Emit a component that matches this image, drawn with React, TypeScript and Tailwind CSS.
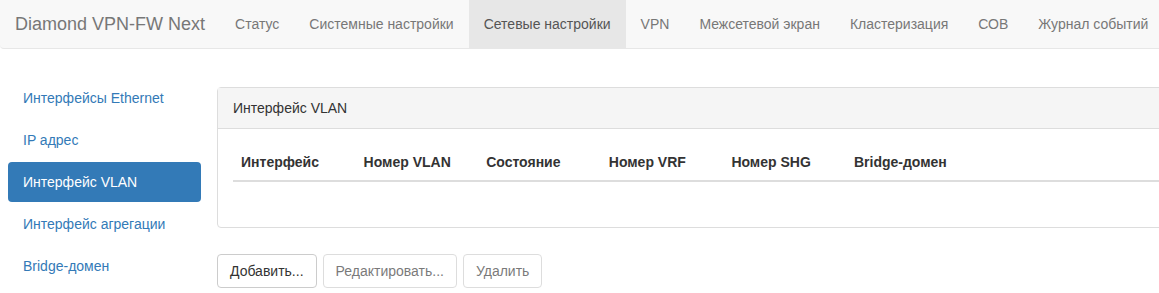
import React from 'react';

const navItems = [
  'Статус',
  'Системные настройки',
  'Сетевые настройки',
  'VPN',
  'Межсетевой экран',
  'Кластеризация',
  'СОВ',
  'Журнал событий',
];

const sideItems = [
  'Интерфейсы Ethernet',
  'IP адрес',
  'Интерфейс VLAN',
  'Интерфейс агрегации',
  'Bridge-домен',
];

const columns = ['Интерфейс', 'Номер VLAN', 'Состояние', 'Номер VRF', 'Номер SHG', 'Bridge-домен'];

export default function App() {
  return (
    <div
      className="w-full h-[293px] overflow-hidden bg-white text-[14px] text-[#333]"
      style={{ fontFamily: '"Liberation Sans", Arial, sans-serif' }}
    >
      <div className="w-[1300px]">
        {/* Top navbar */}
        <div className="flex h-[49px] items-stretch bg-[#f8f8f8] border-b border-[#e7e7e7] rounded-bl-[4px]">
          <div className="flex items-center px-[15px] text-[18px] text-[#777]">Diamond VPN-FW Next</div>
          <ul className="flex items-stretch">
            {navItems.map((item) => (
              <li
                key={item}
                className={`flex items-center px-[15px] ${
                  item === 'Сетевые настройки' ? 'bg-[#e7e7e7] text-[#555]' : 'text-[#777]'
                }`}
              >
                {item}
              </li>
            ))}
          </ul>
        </div>

        <div className="flex gap-[16px] pl-[8px]">
          {/* Side pills */}
          <ul className="w-[193px] pt-[29px] flex flex-col gap-[2px]">
            {sideItems.map((item) => (
              <li
                key={item}
                className={`flex h-[40px] items-center px-[15px] rounded-[4px] ${
                  item === 'Интерфейс VLAN' ? 'bg-[#337ab7] text-white' : 'text-[#337ab7]'
                }`}
              >
                {item}
              </li>
            ))}
          </ul>

          {/* Main */}
          <div className="flex-1 pt-[38px]">
            <div className="border border-[#ddd] rounded-[4px]">
              <div className="h-[41px] flex items-center px-[15px] bg-[#f5f5f5] border-b border-[#ddd] text-[#333]">
                Интерфейс VLAN
              </div>
              <div className="px-[15px] pt-[15px] pb-[45px]">
                <table className="w-full border-collapse table-fixed">
                  <thead>
                    <tr className="border-b-2 border-[#ddd]">
                      {columns.map((c) => (
                        <th key={c} className="w-[122.6px] p-[8px] h-[37px] text-left font-bold leading-[20px] whitespace-nowrap">
                          {c}
                        </th>
                      ))}
                      <th className="p-[8px]"></th>
                    </tr>
                  </thead>
                </table>
              </div>
            </div>

            <div className="flex gap-[6px] mt-[26px]">
              <button className="h-[34px] px-[12px] border border-[#ccc] rounded-[4px] bg-white text-[#333]">
                Добавить...
              </button>
              <button disabled className="h-[34px] px-[12px] border border-[#ccc] rounded-[4px] bg-white text-[#333] opacity-[0.65]">
                Редактировать...
              </button>
              <button disabled className="h-[34px] px-[12px] border border-[#ccc] rounded-[4px] bg-white text-[#333] opacity-[0.65]">
                Удалить
              </button>
            </div>
          </div>
        </div>
      </div>
    </div>
  );
}
